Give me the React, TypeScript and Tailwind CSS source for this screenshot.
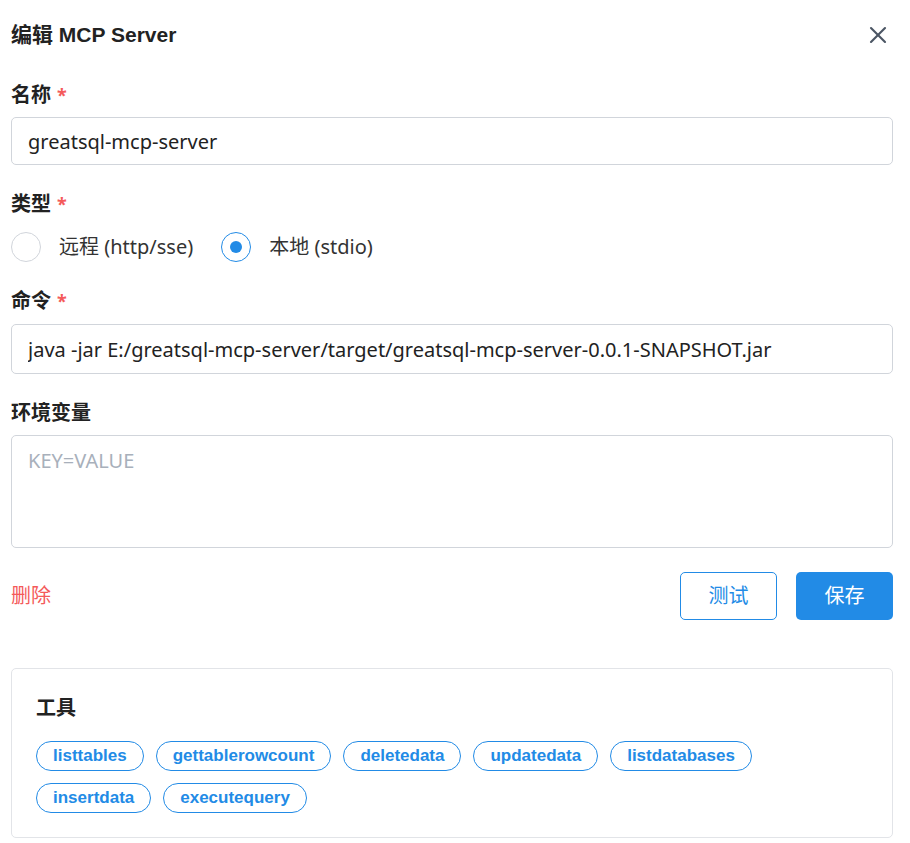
import { X } from "lucide-react";

const tools = [
  "listtables",
  "gettablerowcount",
  "deletedata",
  "updatedata",
  "listdatabases",
  "insertdata",
  "executequery",
];

function Label({ text, required }: { text: string; required?: boolean }) {
  return (
    <div className="flex items-center gap-[6px] text-[20px] font-bold leading-7 text-[#222]">
      <span>{text}</span>
      {required && <span className="text-[#f45a5a] text-[18px]">*</span>}
    </div>
  );
}

function Radio({ label, checked }: { label: string; checked?: boolean }) {
  return (
    <label className="flex items-center gap-[18px]">
      <span
        className={
          checked
            ? "w-[30px] h-[30px] rounded-full border border-[#228be6] flex items-center justify-center"
            : "w-[30px] h-[30px] rounded-full border border-[#d1d5db]"
        }
      >
        {checked && <span className="w-3 h-3 rounded-full bg-[#228be6]" />}
      </span>
      <span className="text-[20px] text-[#333]">{label}</span>
    </label>
  );
}

export default function App() {
  return (
    <div
      className="w-[910px] h-[843px] bg-white pl-[11px] pr-[17px] text-[#333] overflow-hidden"
      style={{ fontFamily: '"Noto Sans", "Noto Sans CJK SC", sans-serif' }}
    >
      <div className="h-[70px] flex items-center justify-between">
        <h1
          className="text-[21px] font-bold text-[#222]"
          style={{ fontFamily: '"Liberation Sans", "Noto Sans CJK SC", sans-serif' }}
        >
          编辑 MCP Server
        </h1>
        <X size={28} strokeWidth={1.8} className="text-[#4b5563] mr-[1px]" />
      </div>

      <div className="mt-[11px]">
        <Label text="名称" required />
        <input
          className="mt-2 w-full h-[48px] border border-[#d1d5db] rounded-[5px] px-4 text-[20px] text-[#222] outline-none"
          defaultValue="greatsql-mcp-server"
        />
      </div>

      <div className="mt-[25px]">
        <Label text="类型" required />
        <div className="mt-[14px] flex items-center gap-[28px]">
          <Radio label="远程 (http/sse)" />
          <Radio label="本地 (stdio)" checked />
        </div>
      </div>

      <div className="mt-[25px]">
        <Label text="命令" required />
        <input
          className="mt-[9px] w-full h-[50px] border border-[#d1d5db] rounded-[5px] px-4 text-[20px] text-[#222] outline-none"
          defaultValue="java -jar E:/greatsql-mcp-server/target/greatsql-mcp-server-0.0.1-SNAPSHOT.jar"
        />
      </div>

      <div className="mt-[25px]">
        <Label text="环境变量" />
        <textarea
          className="mt-2 block w-full h-[113px] border border-[#d1d5db] rounded-[5px] px-4 py-[10px] text-[20px] text-[#222] placeholder:text-[#a8b0bb] outline-none resize-none"
          placeholder="KEY=VALUE"
        />
      </div>

      <div className="mt-[24px] flex items-center justify-between">
        <button className="text-[20px] text-[#f45a5a]">删除</button>
        <div className="flex gap-[19px]">
          <button className="w-[97px] h-[48px] border border-[#228be6] rounded-[5px] text-[20px] text-[#228be6] bg-white">
            测试
          </button>
          <button className="w-[97px] h-[48px] rounded-[5px] text-[20px] text-white bg-[#228be6]">
            保存
          </button>
        </div>
      </div>

      <div className="mt-[48px] h-[170px] border border-[#e2e4e8] rounded-[5px] px-6 pt-[25px]">
        <div className="text-[20px] font-bold leading-7 text-[#222]">工具</div>
        <div className="mt-[19px] flex flex-wrap gap-x-3 gap-y-3 w-[740px]">
          {tools.map((t) => (
            <span
              key={t}
              className="h-[30px] px-4 flex items-center border border-[#228be6] rounded-full text-[17px] font-bold text-[#228be6]"
              style={{ fontFamily: '"Liberation Sans", sans-serif' }}
            >
              {t}
            </span>
          ))}
        </div>
      </div>
    </div>
  );
}
